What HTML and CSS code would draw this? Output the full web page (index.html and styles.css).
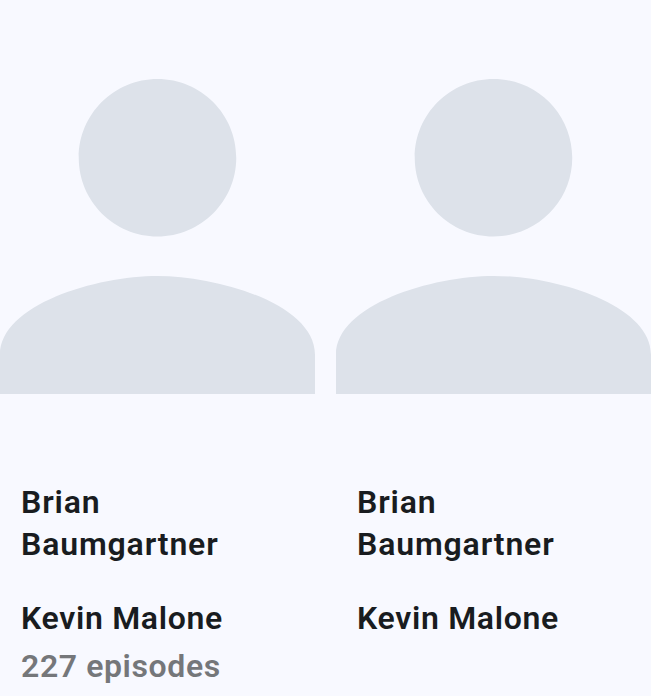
FILE: index.html
```html
<!DOCTYPE html>
<html lang="en">
<head>
<meta charset="utf-8">
<title>Cast</title>
<link rel="stylesheet" href="styles.css">
</head>
<body>
<main class="cast">
  <article class="card">
    <svg class="avatar" viewBox="4 4 16 16" aria-hidden="true"><path d="M12 12c2.210 0 4-1.790 4-4s-1.790-4-4-4-4 1.790-4 4 1.790 4 4 4zm0 2c-3.100 0-8 1.450-8 4v2h16v-2c0-2.550-4.900-4-8-4z"/></svg>
    <div class="info">
      <h2 class="name">Brian Baumgartner</h2>
      <p class="role">Kevin Malone</p>
      <p class="episodes">227 episodes</p>
    </div>
  </article>
  <article class="card">
    <svg class="avatar" viewBox="4 4 16 16" aria-hidden="true"><path d="M12 12c2.210 0 4-1.790 4-4s-1.790-4-4-4-4 1.790-4 4 1.790 4 4 4zm0 2c-3.100 0-8 1.450-8 4v2h16v-2c0-2.550-4.900-4-8-4z"/></svg>
    <div class="info">
      <h2 class="name">Brian Baumgartner</h2>
      <p class="role">Kevin Malone</p>
    </div>
  </article>
</main>
</body>
</html>
```
FILE: styles.css
```css
body {
  margin: 0;
  background: #f8f9ff;
  color: #191c20;
  font-family: Roboto, sans-serif;
}

.cast {
  display: grid;
  grid-template-columns: repeat(2, 315px);
  gap: 21px;
  padding-top: 79px;
}

.avatar {
  display: block;
  width: 315px;
  height: 315px;
  fill: #dde2ea;
}

.info {
  padding: 87px 21px 0;
}

.name,
.role,
.episodes {
  margin: 0;
  font-size: 32px;
  line-height: 42px;
  font-weight: 600;
  letter-spacing: 0.85px;
}

.role {
  margin-top: 32px;
  letter-spacing: 0.68px;
}

.episodes {
  margin-top: 6px;
  color: #75777a;
  letter-spacing: 0.6px;
}
```
